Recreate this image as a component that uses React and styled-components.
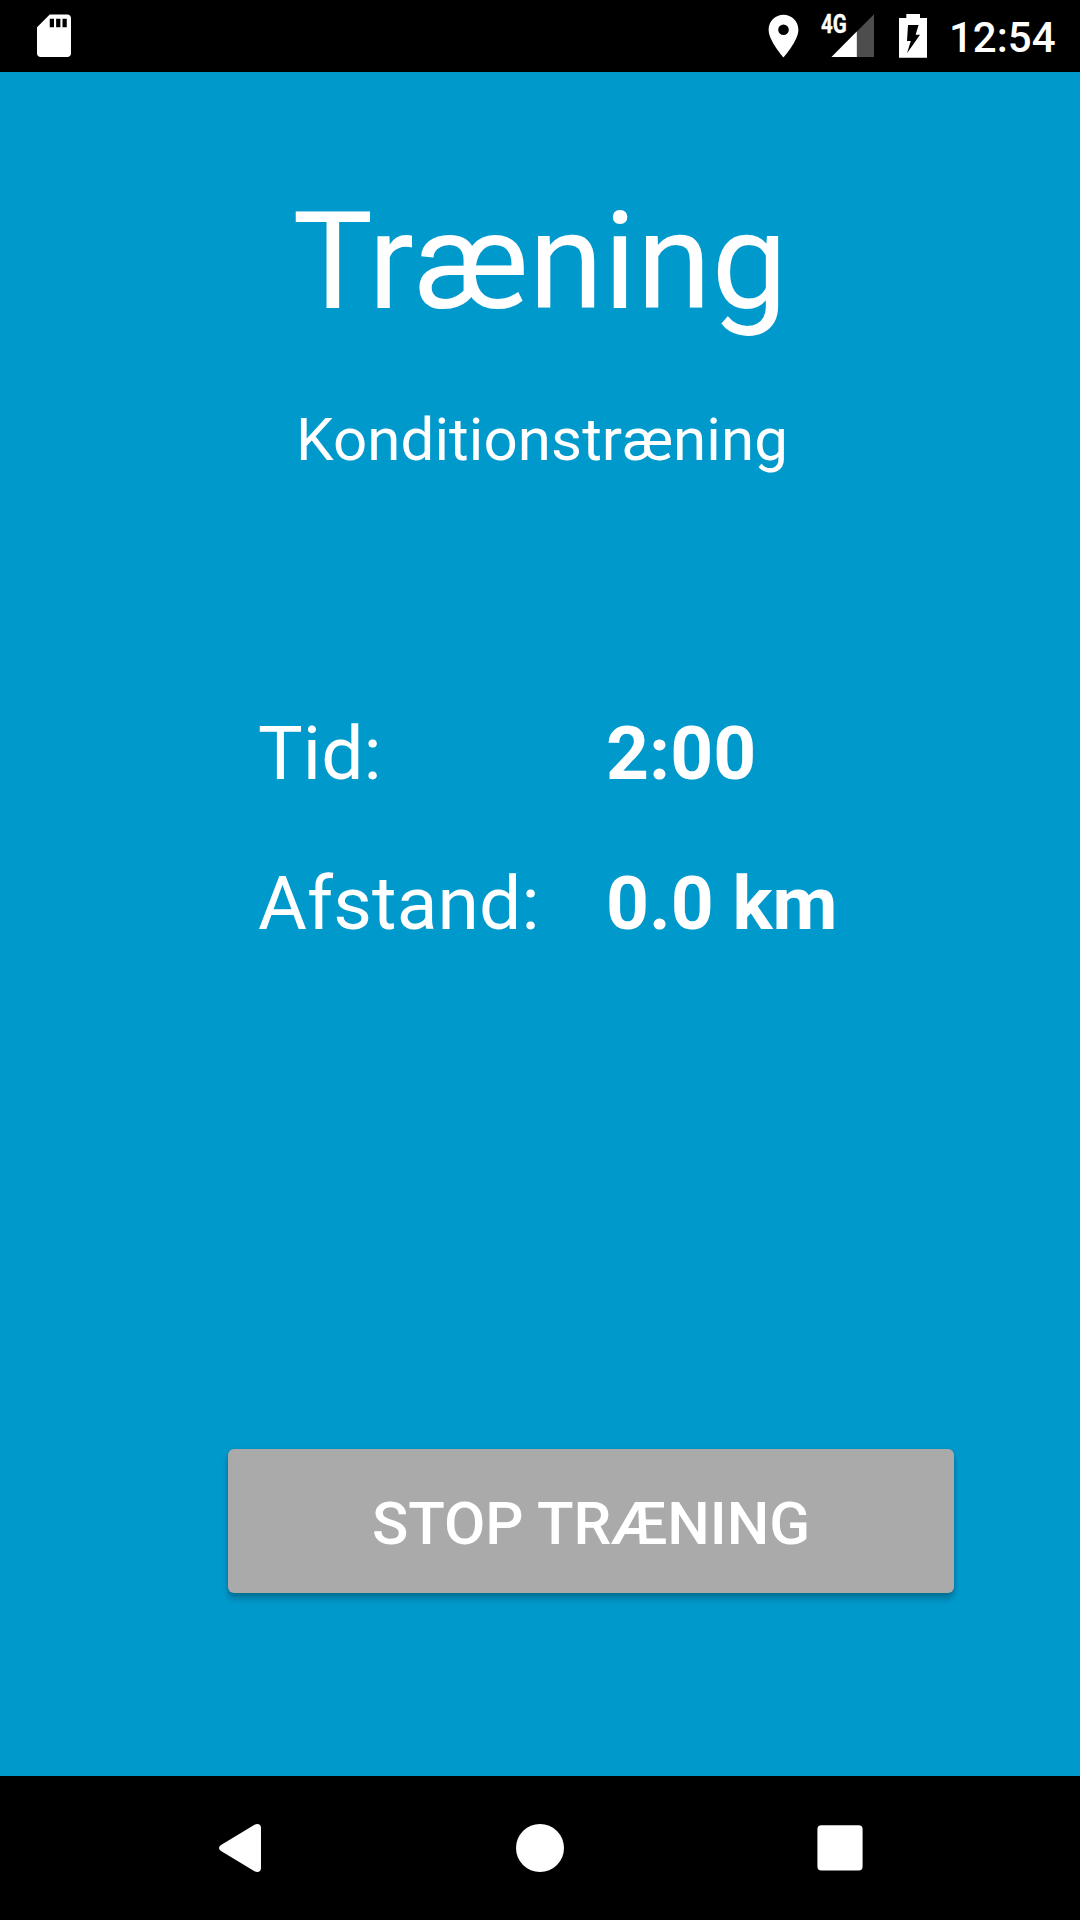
import React from "react";
import styled, { createGlobalStyle } from "styled-components";

const GlobalStyle = createGlobalStyle`
  * { box-sizing: border-box; }
  body { margin: 0; background: #0099cc; }
`;

const Screen = styled.div`
  display: flex;
  flex-direction: column;
  width: 1080px;
  height: 1920px;
  overflow: hidden;
  background: #0099cc;
  color: #fff;
  font-family: Roboto, "Liberation Sans", sans-serif;
`;

const StatusBar = styled.header`
  display: flex;
  justify-content: space-between;
  flex: none;
  height: 72px;
  padding: 0 24px 0 28px;
  background: #000;
`;

const StatusGroup = styled.div`
  display: flex;
  height: 72px;
`;

const Glyph = styled.svg`
  display: block;
  flex: none;
`;

const SignalGlyph = styled(Glyph)`
  margin-left: -15px;
`;

const Network = styled.span`
  width: 25px;
  height: 72px;
  margin-left: 11px;
  font-size: 26px;
  font-weight: 700;
  line-height: 49px;
  transform: scaleX(0.79);
  transform-origin: left;
  white-space: nowrap;
  -webkit-text-stroke: 0.4px #fff;
`;

const Clock = styled.time`
  width: 107px;
  margin-left: 22px;
  font-size: 42px;
  font-weight: 500;
  line-height: 76px;
  white-space: nowrap;
`;

const Content = styled.main`
  display: flex;
  flex-direction: column;
  flex: 1;
  padding-top: 100px;
`;

const Title = styled.h1`
  margin: 0;
  font-size: 135px;
  font-weight: 400;
  letter-spacing: 0.3px;
  line-height: 180px;
  text-align: center;
`;

const Subtitle = styled.p`
  margin: 48px 0 0;
  padding-left: 4px;
  font-size: 60px;
  letter-spacing: 0.1px;
  line-height: 80px;
  text-align: center;
`;

const Stats = styled.dl`
  display: grid;
  grid-template-columns: 348px auto;
  row-gap: 50px;
  margin: 223px 0 0;
  padding-left: 258px;
  font-size: 75px;
  line-height: 100px;
`;

const Label = styled.dt`
  letter-spacing: 0.1px;
`;

const Value = styled.dd`
  margin: 0;
  font-weight: 700;
`;

const StopButton = styled.button`
  width: 726px;
  height: 144px;
  margin: 496px 0 0 228px;
  padding: 5px 0 0;
  border: 0;
  border-radius: 6px;
  background: #aaa;
  box-shadow: 0 6px 6px rgba(0, 0, 0, 0.22), 0 1px 4px rgba(0, 0, 0, 0.14);
  color: #fff;
  font: 500 60px/80px Roboto, "Liberation Sans", sans-serif;
  letter-spacing: -0.05px;
  text-transform: uppercase;
`;

const NavBar = styled.nav`
  display: flex;
  justify-content: center;
  flex: none;
  height: 144px;
  background: #000;
`;

const NavButton = styled.button`
  display: flex;
  width: 300px;
  height: 144px;
  padding: 0;
  border: 0;
  background: none;
  color: #fff;
`;

const stats = [
  { label: "Tid:", value: "2:00" },
  { label: "Afstand:", value: "0.0 km" },
];

export default function App() {
  return (
    <Screen>
      <GlobalStyle />
      <StatusBar>
        <StatusGroup>
          <Glyph width="52" height="72" fill="#fff">
            <path
              transform="translate(0.5 10.25) scale(2.125)"
              d="M18.3 2H10L4 8v12.3c0 .94.76 1.7 1.7 1.7h12.6c.94 0 1.7-.76 1.7-1.7V3.7c0-.94-.76-1.7-1.7-1.7zM12 8h-2V4h2v4zm3 0h-2V4h2v4zm3 0h-2V4h2v4z"
            />
          </Glyph>
        </StatusGroup>
        <StatusGroup>
          <Glyph width="52" height="72" fill="#fff">
            <path
              transform="translate(0 10.6) scale(2.125)"
              d="M12 2C8.13 2 5 5.13 5 9c0 5.25 7 13 7 13s7-7.75 7-13c0-3.87-3.13-7-7-7zm0 9.5a2.5 2.5 0 0 1 0-5 2.5 2.5 0 0 1 0 5z"
            />
          </Glyph>
          <Network>4G</Network>
          <SignalGlyph width="64" height="72">
            <path d="M43 14.3V57H.5z" fill="#4d4d4d" />
            <path d="M25.8 31.5V57H.5z" fill="#fff" />
          </SignalGlyph>
          <Glyph width="32" height="72" fill="#fff">
            <path
              fillRule="evenodd"
              d="M11.3 14h13.7v4h7v39.7H4V18h7.3zM13 25H23.600L20.600 34.800H25L12 53.300L15.800 41H12z"
            />
          </Glyph>
          <Clock>12:54</Clock>
        </StatusGroup>
      </StatusBar>
      <Content>
        <Title>Træning</Title>
        <Subtitle>Konditionstræning</Subtitle>
        <Stats>
          {stats.map((s) => (
            <React.Fragment key={s.label}>
              <Label>{s.label}</Label>
              <Value>{s.value}</Value>
            </React.Fragment>
          ))}
        </Stats>
        <StopButton>Stop træning</StopButton>
      </Content>
      <NavBar>
        <NavButton aria-label="Back">
          <Glyph width="300" height="144" fill="#fff">
            <path d="M131 69L164.500 48.800C168 46.900 171 48.500 171 52V92C171 95.500 168 97.100 164.500 95.200L131 75Q127 72 131 69z" />
          </Glyph>
        </NavButton>
        <NavButton aria-label="Home">
          <Glyph width="300" height="144" fill="#fff">
            <circle cx="150" cy="72" r="24" />
          </Glyph>
        </NavButton>
        <NavButton aria-label="Recent apps">
          <Glyph width="300" height="144" fill="#fff">
            <rect x="127.400" y="49.300" width="45.200" height="45.200" rx="4" />
          </Glyph>
        </NavButton>
      </NavBar>
    </Screen>
  );
}
